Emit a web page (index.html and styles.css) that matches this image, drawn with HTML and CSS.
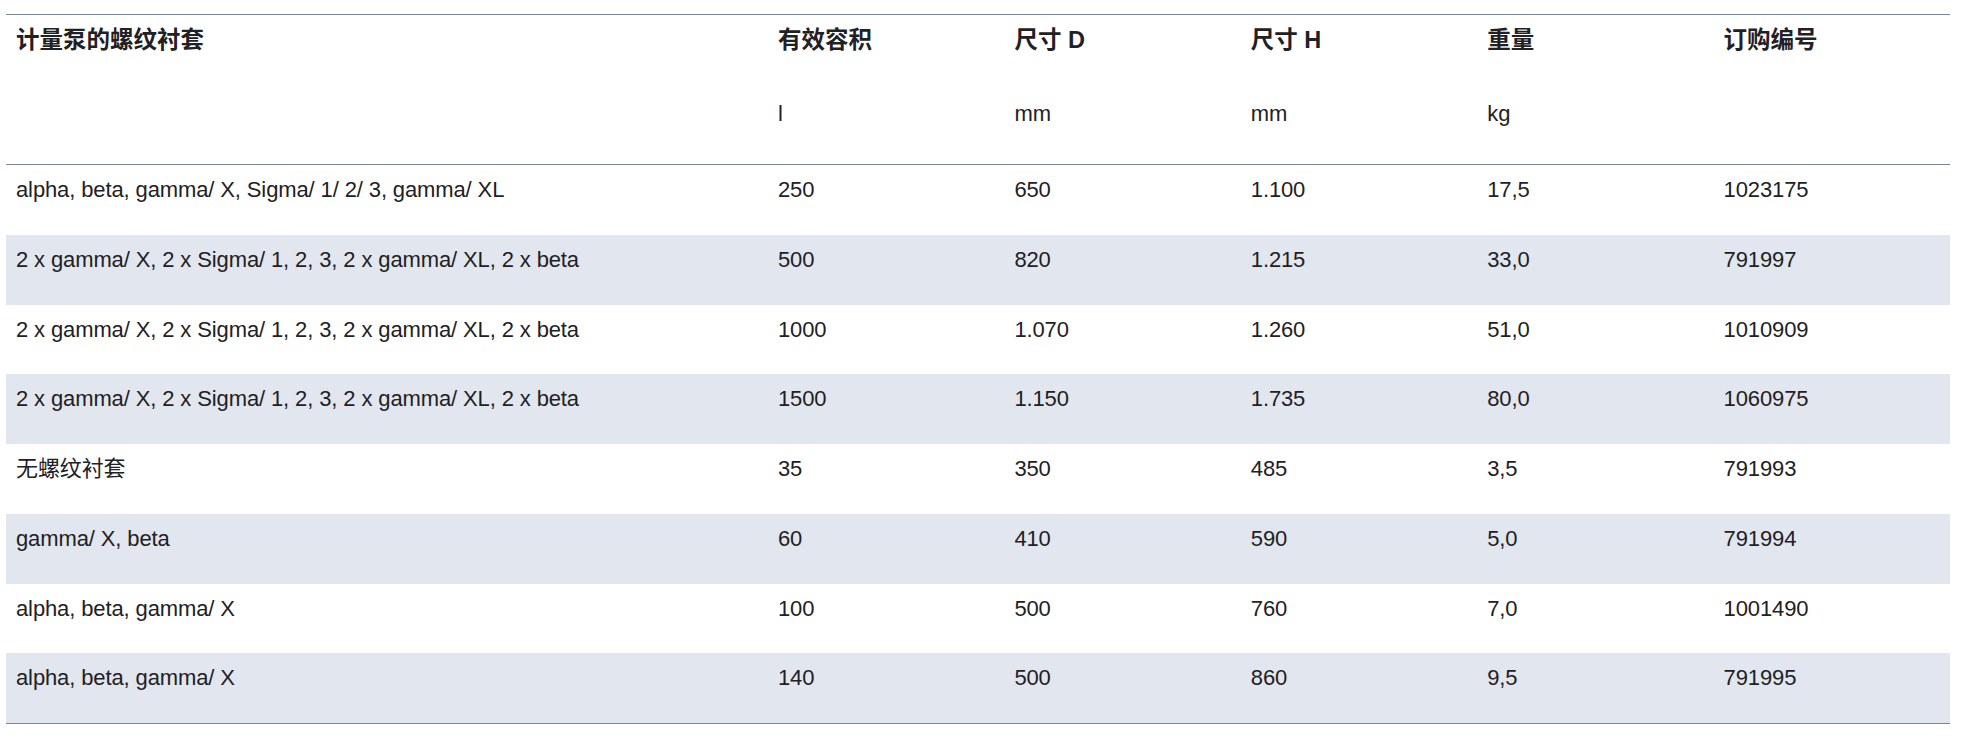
FILE: index.html
```html
<!DOCTYPE html>
<html lang="zh-CN">
<head>
<meta charset="utf-8">
<title>计量泵的螺纹衬套</title>
<link rel="stylesheet" href="styles.css">
</head>
<body>
<div class="wrap">
<table class="spec">
  <colgroup>
    <col class="c-name">
    <col><col><col><col><col>
  </colgroup>
  <thead>
    <tr>
      <th><span class="t">计量泵的螺纹衬套</span><span class="u">&nbsp;</span></th>
      <th><span class="t">有效容积</span><span class="u">l</span></th>
      <th><span class="t">尺寸 D</span><span class="u">mm</span></th>
      <th><span class="t">尺寸 H</span><span class="u">mm</span></th>
      <th><span class="t">重量</span><span class="u">kg</span></th>
      <th><span class="t">订购编号</span><span class="u">&nbsp;</span></th>
    </tr>
  </thead>
  <tbody>
    <tr><td>alpha, beta, gamma/ X, Sigma/ 1/ 2/ 3, gamma/ XL</td><td>250</td><td>650</td><td>1.100</td><td>17,5</td><td>1023175</td></tr>
    <tr><td>2 x gamma/ X, 2 x Sigma/ 1, 2, 3, 2 x gamma/ XL, 2 x beta</td><td>500</td><td>820</td><td>1.215</td><td>33,0</td><td>791997</td></tr>
    <tr><td>2 x gamma/ X, 2 x Sigma/ 1, 2, 3, 2 x gamma/ XL, 2 x beta</td><td>1000</td><td>1.070</td><td>1.260</td><td>51,0</td><td>1010909</td></tr>
    <tr><td>2 x gamma/ X, 2 x Sigma/ 1, 2, 3, 2 x gamma/ XL, 2 x beta</td><td>1500</td><td>1.150</td><td>1.735</td><td>80,0</td><td>1060975</td></tr>
    <tr><td>无螺纹衬套</td><td>35</td><td>350</td><td>485</td><td>3,5</td><td>791993</td></tr>
    <tr><td>gamma/ X, beta</td><td>60</td><td>410</td><td>590</td><td>5,0</td><td>791994</td></tr>
    <tr><td>alpha, beta, gamma/ X</td><td>100</td><td>500</td><td>760</td><td>7,0</td><td>1001490</td></tr>
    <tr><td>alpha, beta, gamma/ X</td><td>140</td><td>500</td><td>860</td><td>9,5</td><td>791995</td></tr>
  </tbody>
</table>
</div>
</body>
</html>
```

FILE: styles.css
```css
html, body {
  margin: 0;
  padding: 0;
  background: #ffffff;
}
body {
  font-family: "Liberation Sans", Arial, "Noto Sans CJK SC", sans-serif;
  color: #1f2124;
  font-size: 22px;
  line-height: 26px;
}
.wrap {
  padding: 14px 0 0 6px;
}
.spec {
  width: 1944px;
  border-collapse: collapse;
  table-layout: fixed;
  border-top: 1.5px solid #7a8795;
  border-bottom: 1.5px solid #7a8795;
}
.c-name {
  width: 762px;
}
.spec th {
  text-align: left;
  vertical-align: top;
  font-weight: 700;
  font-size: 23.5px;
  padding: 12px 10px 37px 10px;
  border-bottom: 1.5px solid #7a8795;
}
.spec th .t {
  display: block;
}
.spec th .u {
  display: block;
  font-weight: 400;
  font-size: 22px;
  margin-top: 48px;
}
.spec td {
  vertical-align: top;
  padding: 12px 10px 0 10px;
  height: 57.75px;
  box-sizing: content-box;
  letter-spacing: -0.12px;
}
.spec tbody tr:nth-child(even) td {
  background: #e2e6ef;
}
```
